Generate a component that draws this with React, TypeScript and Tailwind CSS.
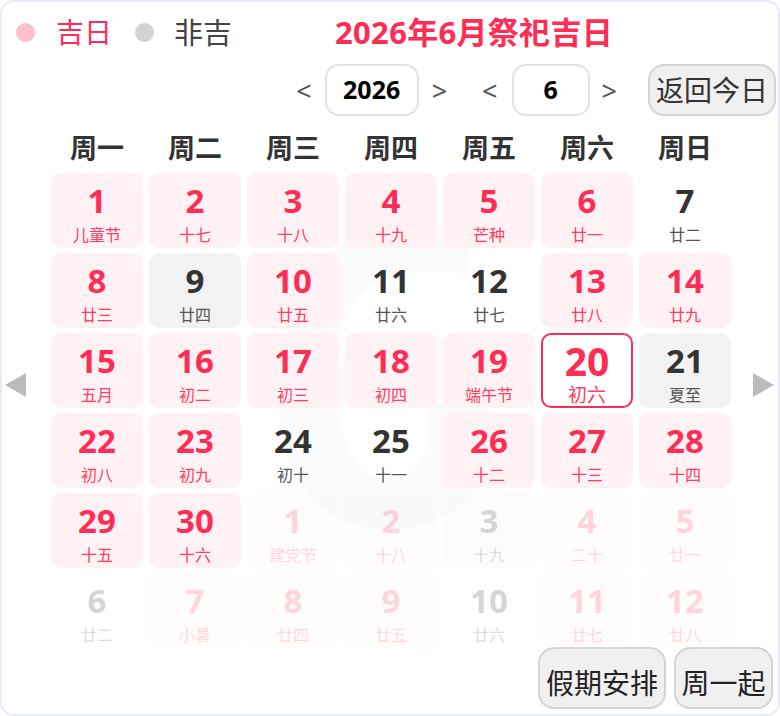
type Kind = "red" | "plain" | "gray" | "today";

interface Day {
  n: number;
  lunar: string;
  kind: Kind;
  faded?: boolean;
}

const days: Day[] = [
  { n: 1, lunar: "儿童节", kind: "red" },
  { n: 2, lunar: "十七", kind: "red" },
  { n: 3, lunar: "十八", kind: "red" },
  { n: 4, lunar: "十九", kind: "red" },
  { n: 5, lunar: "芒种", kind: "red" },
  { n: 6, lunar: "廿一", kind: "red" },
  { n: 7, lunar: "廿二", kind: "plain" },
  { n: 8, lunar: "廿三", kind: "red" },
  { n: 9, lunar: "廿四", kind: "gray" },
  { n: 10, lunar: "廿五", kind: "red" },
  { n: 11, lunar: "廿六", kind: "plain" },
  { n: 12, lunar: "廿七", kind: "plain" },
  { n: 13, lunar: "廿八", kind: "red" },
  { n: 14, lunar: "廿九", kind: "red" },
  { n: 15, lunar: "五月", kind: "red" },
  { n: 16, lunar: "初二", kind: "red" },
  { n: 17, lunar: "初三", kind: "red" },
  { n: 18, lunar: "初四", kind: "red" },
  { n: 19, lunar: "端午节", kind: "red" },
  { n: 20, lunar: "初六", kind: "today" },
  { n: 21, lunar: "夏至", kind: "gray" },
  { n: 22, lunar: "初八", kind: "red" },
  { n: 23, lunar: "初九", kind: "red" },
  { n: 24, lunar: "初十", kind: "plain" },
  { n: 25, lunar: "十一", kind: "plain" },
  { n: 26, lunar: "十二", kind: "red" },
  { n: 27, lunar: "十三", kind: "red" },
  { n: 28, lunar: "十四", kind: "red" },
  { n: 29, lunar: "十五", kind: "red" },
  { n: 30, lunar: "十六", kind: "red" },
  { n: 1, lunar: "建党节", kind: "red", faded: true },
  { n: 2, lunar: "十八", kind: "red", faded: true },
  { n: 3, lunar: "十九", kind: "gray", faded: true },
  { n: 4, lunar: "二十", kind: "red", faded: true },
  { n: 5, lunar: "廿一", kind: "red", faded: true },
  { n: 6, lunar: "廿二", kind: "plain", faded: true },
  { n: 7, lunar: "小暑", kind: "red", faded: true },
  { n: 8, lunar: "廿四", kind: "red", faded: true },
  { n: 9, lunar: "廿五", kind: "red", faded: true },
  { n: 10, lunar: "廿六", kind: "plain", faded: true },
  { n: 11, lunar: "廿七", kind: "red", faded: true },
  { n: 12, lunar: "廿八", kind: "red", faded: true },
];

const weekdays = ["周一", "周二", "周三", "周四", "周五", "周六", "周日"];

const font = { fontFamily: '"Noto Sans", "Noto Sans CJK SC", sans-serif' };

function Cell({ d }: { d: Day }) {
  const box =
    d.kind === "red"
      ? "bg-[#fff1f4]"
      : d.kind === "gray"
        ? "bg-[#f2f2f2]"
        : d.kind === "today"
          ? "bg-white border-2 border-[#ff2d55]"
          : "";
  const num = d.kind === "red" || d.kind === "today" ? "text-[#ff2d55]" : "text-[#333]";
  const lun = d.kind === "red" || d.kind === "today" ? "text-[#ff3d62]" : "text-[#555]";
  const today = d.kind === "today";
  return (
    <div
      className={`h-[75px] rounded-[10px] flex flex-col items-center ${box} ${d.faded ? "opacity-20" : ""}`}
    >
      <div
        className={`font-bold leading-none ${num} ${today ? "text-[39px] mt-[6px]" : "text-[33px] mt-[11px]"}`}
      >
        {d.n}
      </div>
      <div className={`leading-none ${lun} ${today ? "text-[19px] mt-[6px]" : "text-[16px] mt-[10px]"}`}>
        {d.lunar}
      </div>
    </div>
  );
}

function Triangle({ dir }: { dir: "left" | "right" }) {
  return (
    <svg width="21" height="24" viewBox="0 0 21 24">
      <polygon points={dir === "left" ? "21,0 21,24 0,12" : "0,0 0,24 21,12"} fill="#bbbbbb" />
    </svg>
  );
}

export default function App() {
  return (
    <div
      className="relative w-[780px] h-[716px] overflow-hidden bg-white border-2 border-[#e8ebf5] rounded-[14px]"
      style={font}
    >
      {/* faint month watermark */}
      <div
        aria-hidden="true"
        className="absolute left-[262px] top-[150px] text-[420px] font-bold leading-none text-[#fbfbfb] select-none pointer-events-none"
      >
        6
      </div>

      <div className="relative">
        {/* legend + title */}
        <div className="flex items-center h-[50px] mt-[5px] pl-[14px]">
          <span className="w-[19px] h-[19px] rounded-full bg-[#ffc0cb]" />
          <span className="ml-[21px] text-[28px] leading-none text-[#ff2d55]">吉日</span>
          <span className="ml-[23px] w-[19px] h-[19px] rounded-full bg-[#d3d3d3]" />
          <span className="ml-[20px] text-[29px] leading-none text-[#444]">非吉</span>
          <span className="ml-[103px] text-[31px] font-bold leading-none text-[#ff2d55] tracking-[0.3px]">
            2026年6月祭祀吉日
          </span>
        </div>

        {/* year / month pickers */}
        <div className="flex items-center justify-end h-[52px] mt-[7px] pr-[2px]">
          <span className="text-[27px] text-[#555] leading-none">&lt;</span>
          <div className="ml-[13px] w-[94px] h-[52px] rounded-[14px] border-2 border-[#e3e3e3] flex items-center justify-center text-[25px] font-bold text-black">
            2026
          </div>
          <span className="ml-[13px] text-[27px] text-[#555] leading-none">&gt;</span>
          <span className="ml-[35px] text-[27px] text-[#555] leading-none">&lt;</span>
          <div className="ml-[14px] w-[78px] h-[52px] rounded-[14px] border-2 border-[#e3e3e3] flex items-center justify-center text-[25px] font-bold text-black">
            6
          </div>
          <span className="ml-[12px] text-[27px] text-[#555] leading-none">&gt;</span>
          <button className="ml-[31px] w-[128px] h-[52px] rounded-[16px] bg-[#f0f0f0] border-2 border-[#d4d4d4] text-[28px] text-[#333] leading-none">
            返回今日
          </button>
        </div>

        {/* weekdays */}
        <div className="grid grid-cols-7 gap-x-[6px] w-[680px] ml-[49px] mt-[16px] h-[30px]">
          {weekdays.map((w) => (
            <div key={w} className="flex items-center justify-center text-[27px] font-bold text-[#333] leading-none">
              {w}
            </div>
          ))}
        </div>

        {/* grid with arrows */}
        <div className="flex mt-[11px]">
          <div className="w-[49px] pl-[3px] pt-[200px]">
            <Triangle dir="left" />
          </div>
          <div className="grid grid-cols-7 gap-x-[6px] gap-y-[5px] w-[680px]">
            {days.map((d, i) => (
              <Cell key={i} d={d} />
            ))}
          </div>
          <div className="pl-[22px] pt-[200px]">
            <Triangle dir="right" />
          </div>
        </div>

        {/* bottom buttons */}
        <div className="flex justify-end gap-[8px] pr-[5px] -mt-[1px]">
          <button className="w-[128px] h-[62px] rounded-[16px] bg-[#f0f0f0] border-2 border-[#d4d4d4] text-[28px] text-[#222] leading-none pt-[10px]">
            假期安排
          </button>
          <button className="w-[99px] h-[62px] rounded-[16px] bg-[#f0f0f0] border-2 border-[#d4d4d4] text-[28px] text-[#222] leading-none pt-[10px]">
            周一起
          </button>
        </div>
      </div>
    </div>
  );
}
